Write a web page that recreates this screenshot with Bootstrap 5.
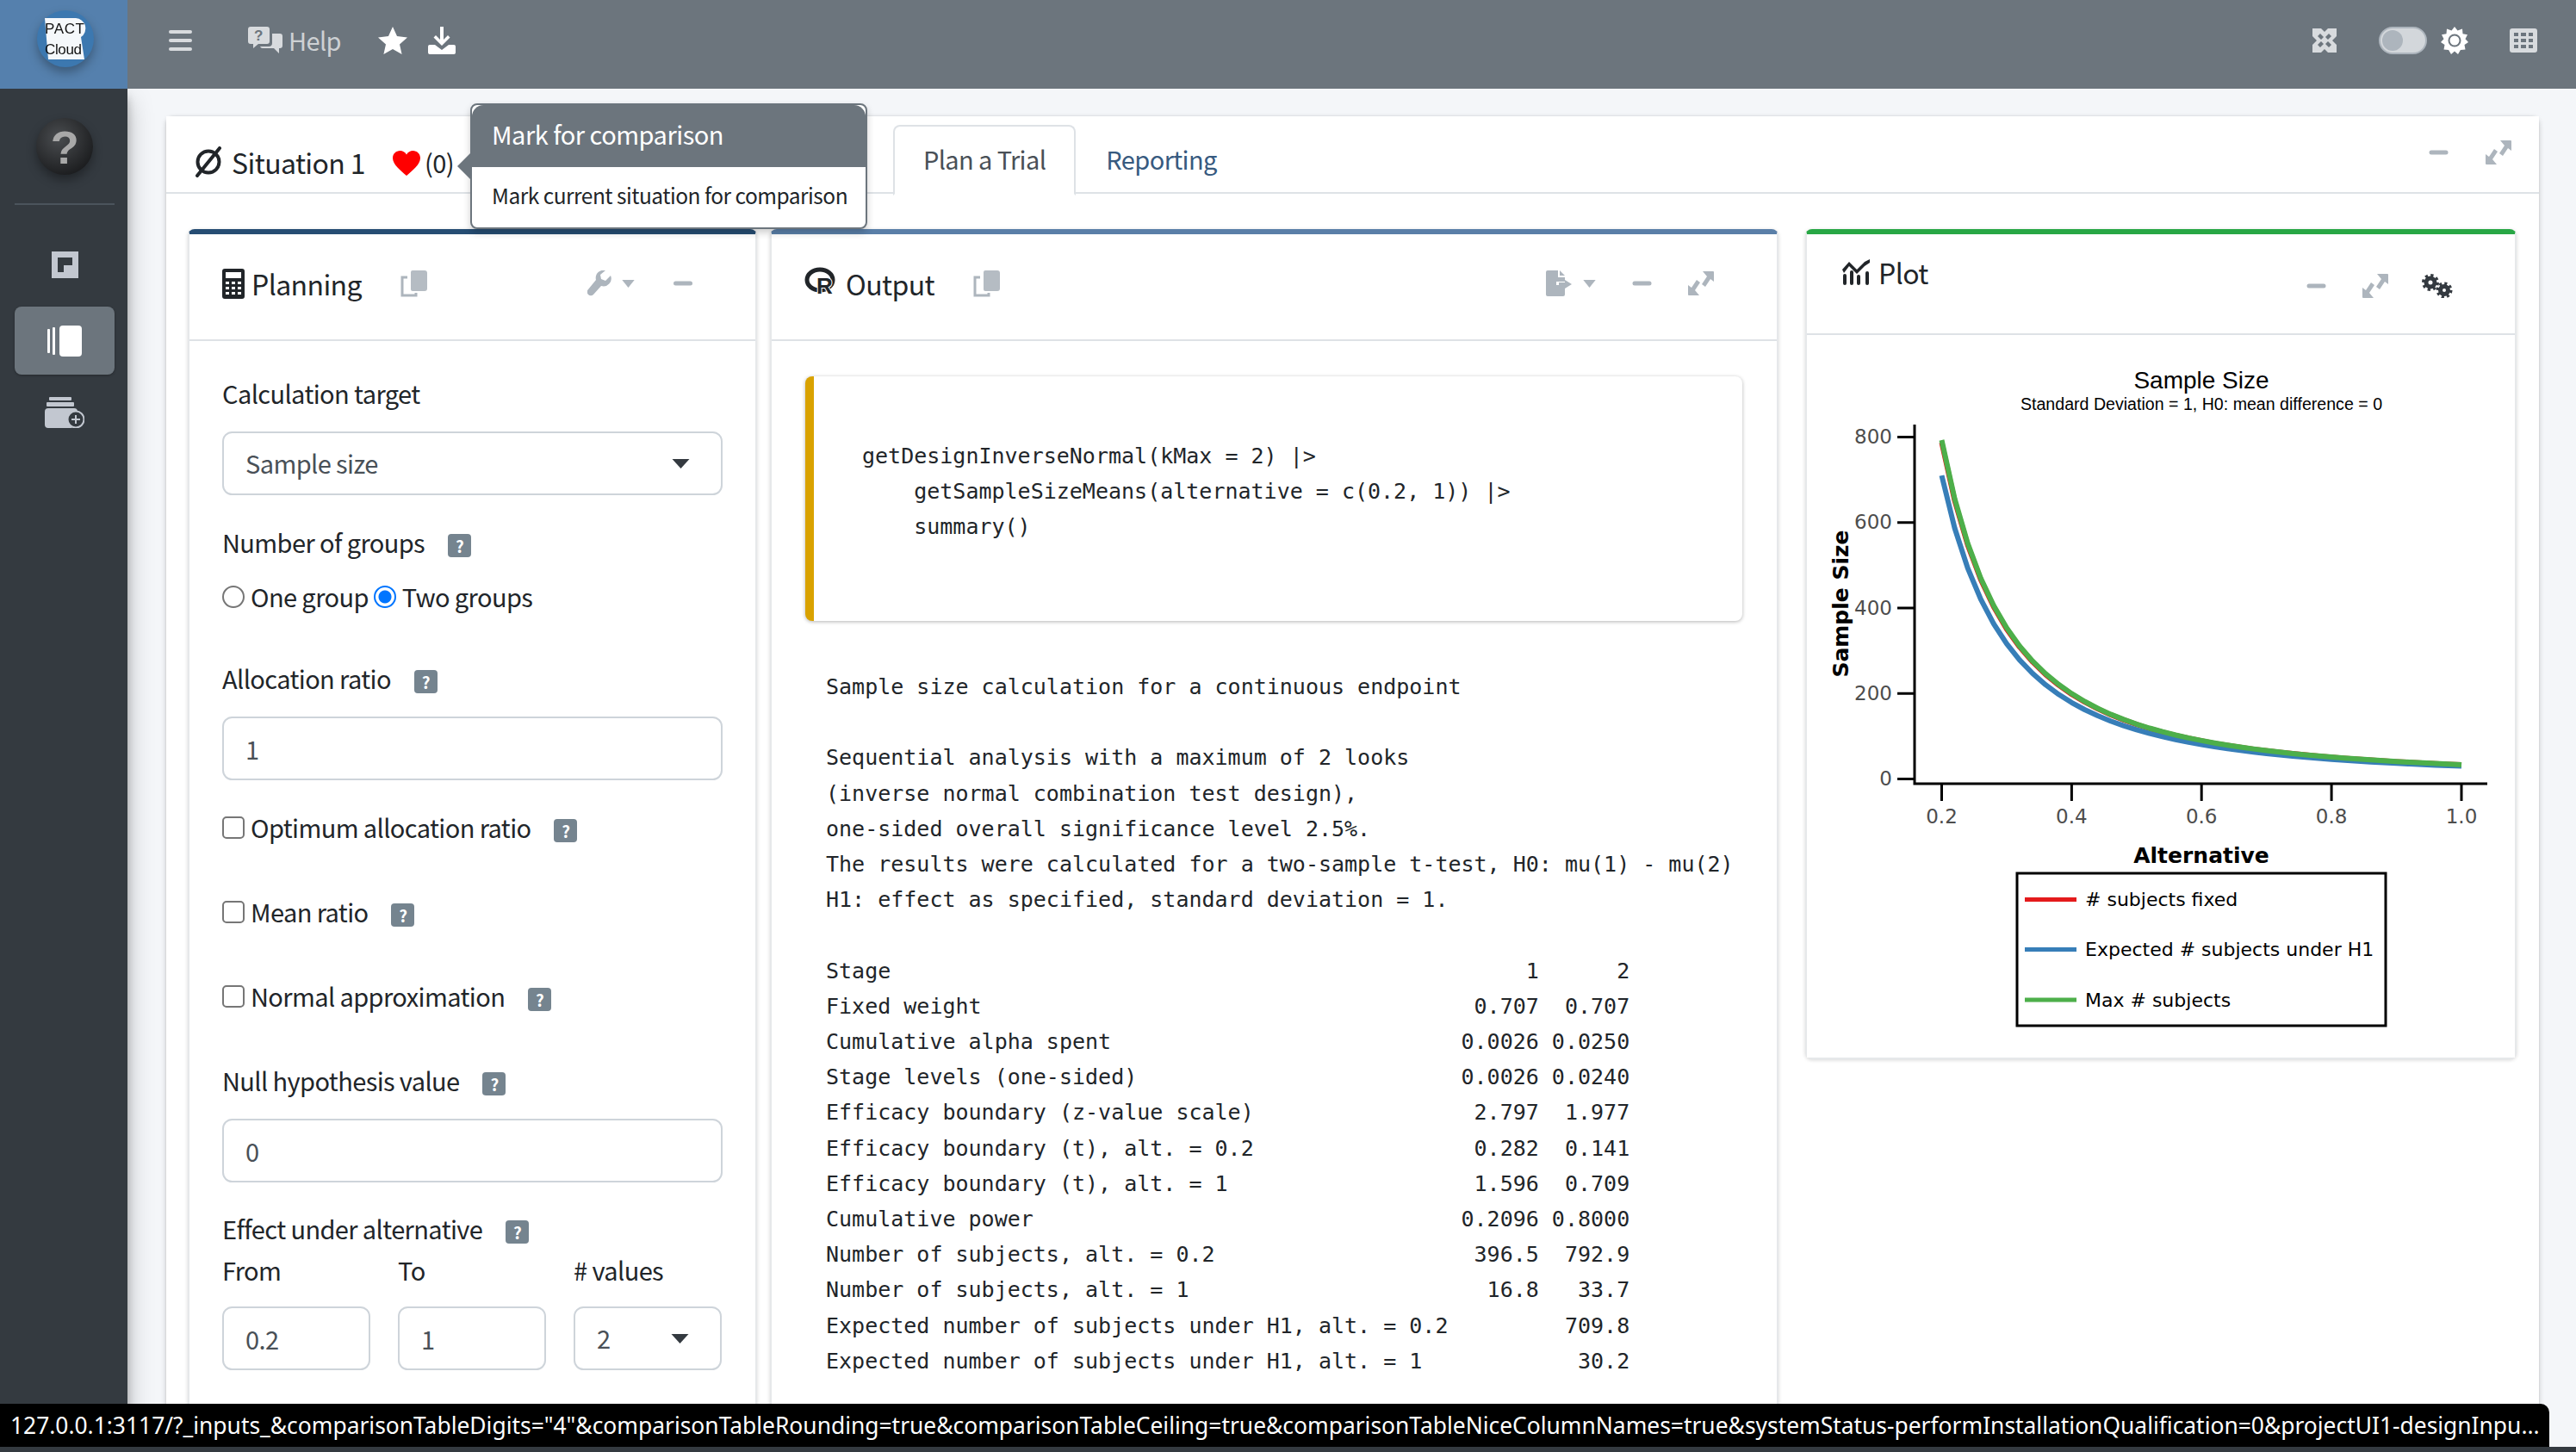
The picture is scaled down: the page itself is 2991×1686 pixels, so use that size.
<!DOCTYPE html>
<html lang="en">
<head>
<meta charset="utf-8">
<title>rpact Cloud</title>
<link href="https://cdn.jsdelivr.net/npm/bootstrap@5.3.3/dist/css/bootstrap.min.css" rel="stylesheet">
<script src="https://cdn.jsdelivr.net/npm/bootstrap@5.3.3/dist/js/bootstrap.bundle.min.js"></script>
<style>
  /* the app was captured at about 190% browser zoom, so scale the rem */
  html { font-size: 30.5px; }
  :root { --bs-border-width: 2px; --bs-border-color: #ced4da; }
  body {
    font-family: "Noto Sans CJK JP", "Noto Sans", sans-serif;
    font-size: 29px; letter-spacing: -.6px; line-height: 46px; color: #212529;
    background: #f4f6f9; height: 100vh; overflow: hidden;
  }
  svg { display: block; flex: none; }

  .top-bar { height: 103px; background: #6c757d; padding: 0 0 10px; flex: none; flex-wrap: nowrap; align-items: center; }
  .brand-box { width: 148px; height: 103px; margin-bottom: -10px; background: #5580ad; padding: 11px 0 0 42px; }
  .brand-logo { filter: drop-shadow(0 6px 6px rgba(0, 0, 0, .3)); }
  .top-ic { color: #d8dbde; }
  .top-wt { color: #fff; }
  .help-txt { color: #ced1d4; margin-left: 7px; margin-right: 43px; margin-top: -2px; }
  .bar-left { padding-left: 48px; }
  .bar-right { padding-right: 45px; }
  .tgl { width: 56px; height: 32px; border-radius: 16px; background: #d3d7db; border: 2px solid #adb5bd; padding: 2px; margin-right: 16px; }
  .tgl-knob { width: 24px; height: 24px; border-radius: 50%; background: #adb5bd; }

  .side-bar { width: 148px; background: #343a40; flex: none; position: relative; z-index: 2;
    box-shadow: 0 14px 28px rgba(0, 0, 0, .25), 0 10px 10px rgba(0, 0, 0, .22); padding: 33px 15px 0 17px; }
  .side-rule { border-top: 2px solid #4b545c; margin: 32px 0 54px; }
  .side-on { background: #6c757d; border-radius: 8px; height: 79px; margin: 33px 0 26px; box-shadow: 0 1px 3px rgba(0, 0, 0, .3); }
  .side-ball { filter: drop-shadow(0 6px 6px rgba(0, 0, 0, .35)); }

  .main-area { padding: 32px 43px 0 45px; min-width: 0; }
  .outer-card { border: 0; border-radius: 8px; box-shadow: 0 0 2px rgba(0, 0, 0, .13), 0 2px 6px rgba(0, 0, 0, .2); }
  .outer-head { height: 90px; padding: 17px 32px 0 32px; background: #fff; border-bottom: 2px solid #dee2e6; }
  .sit-name { font-size: 32px; margin-left: 10px; }
  .sit-heart { margin: 4px 0 0 32px; }
  .sit-count { margin-left: 5px; }
  .outer-head .nav-tabs { margin-left: 510px; border: 0; margin-bottom: -2px; align-self: flex-end; }
  .outer-head .nav-link { padding: 0 33px; height: 82px; line-height: 74px; color: #375a7f; border-width: 2px; border-radius: 8px 8px 0 0; margin-right: 0; }
  .outer-head .nav-link.active { color: #495057; border-color: #dee2e6 #dee2e6 #fff; }
  .card-tools { color: #adb5bd; }

  .panels { display: grid; grid-template-columns: 661px 1171px 810px; column-gap: 15px; padding: 41px 26px 0 25px; align-items: start; }
  .panels > .plot-panel { margin-left: 16px; width: 826px; }
  .panel { border-width: 0 2px 2px; border-color: #e6e8ea; border-radius: 8px; box-shadow: 0 1px 4px rgba(0, 0, 0, .16); }
  .panel-navy { border-top: 6px solid #264d73; }
  .panel-steel { border-top: 6px solid #5a7fa8; }
  .panel-green { border-top: 6px solid #28a745; }
  .panel-head { background: #fff; height: 124px; border-bottom: 2px solid #dee2e6; padding: 0 38px 8px 38px; }
  .panel-title { font-size: 32px; margin-left: 8px; }

  .plan-body { padding: 37px 38px 60px; height: 1290px; }
  .fld-label { margin-bottom: 22px; }
  .help-tag { display: inline-flex; align-items: center; justify-content: center; width: 27px; height: 27px; margin-left: 21px;
    background: #75848f; color: #fff; border-radius: 4px; font-size: 19px; font-weight: 700; vertical-align: 0; line-height: 1; }
  .native-opt { appearance: none; width: 26px; height: 26px; margin: 0 7px 0 0; vertical-align: -1px; background: #fff; border: 2px solid #767676; border-radius: 5px; }
  .native-opt[type=radio] { border-radius: 50%; }
  .native-opt[type=radio]:checked { border-color: #0075ff; background: radial-gradient(circle, #0075ff 0 7px, #fff 8px); }
  .radio-row { margin: -5px 0 49px; }
  .opt-row { margin-bottom: 52px; }
  .ctl { color: #495057; font-size: 29px; letter-spacing: inherit; height: 74px; padding-top: 0; padding-bottom: 0; padding-left: 25px; }
  .form-select.ctl { background-image: url("data:image/svg+xml,%3csvg xmlns='http://www.w3.org/2000/svg' viewBox='0 0 20 11'%3e%3cpath fill='%23343a40' d='M0 0h20L10 11z'/%3e%3c/svg%3e"); background-size: 21px 11px; background-position: right 36px center; }
  .three-up { display: grid; grid-template-columns: repeat(3, 172px); column-gap: 32px; }
  .three-up .fld-label { margin-bottom: 20px; }

  .code-box { margin: 41px 40px 0 39px; height: 284px; border-left: 10px solid #d9a200; border-radius: 8px; padding: 72px 0 0 56px;
    box-shadow: 0 1px 4px rgba(0, 0, 0, .3); background: #fff; }
  .mono-txt { font-family: "DejaVu Sans Mono", "Liberation Mono", monospace; letter-spacing: 0; font-size: 25px; line-height: 41.2px; margin: 0; color: #212529; overflow: visible; }
  .out-text { padding: 56px 0 60px 63px; }

  .plot-svg { letter-spacing: 0; }
  .plot-svg text { font-family: "DejaVu Sans", sans-serif; }
  .plot-svg .arial { font-family: "Liberation Sans", sans-serif; }

  .compare-pop { position: absolute; left: 546px; top: 120px; width: 461px; max-width: none; --bs-popover-border-color: #6c757d; --bs-popover-border-width: 2px; font-family: inherit; font-size: 24.500px; letter-spacing: -.5px; border-radius: 8px; box-shadow: 0 4px 8px rgba(0, 0, 0, .2); }
  .compare-pop .popover-header { background: #6c757d; color: #fff; font-size: 29px; font-weight: 400; height: 72px; padding: 0 23px; line-height: 66px; border: 0; margin: 0; }
  .compare-pop .popover-body { padding: 0 23px; line-height: 66px; height: 70px; color: #212529; white-space: nowrap; }
  .compare-pop .popover-arrow { position: absolute; left: -17px; top: 55px; width: 16px; height: 32px; }
  .url-bubble { position: fixed; left: 0; bottom: 6px; width: 2960px; height: 50px; background: #000; color: #fff; padding: 0 12px; font-family: "Noto Sans", sans-serif; font-size: 26.400px; letter-spacing: 0; line-height: 50px; white-space: nowrap; overflow: hidden; z-index: 20; border-top-right-radius: 10px; }
  .foot-strip { position: fixed; left: 0; right: 0; bottom: 0; height: 6px; background: #343a40; z-index: 19; }
</style>
</head>
<body class="d-flex flex-column">

<!-- icon sprite -->
<svg width="0" height="0" class="position-absolute">
  <symbol id="i-minus" viewBox="0 0 22 6"><rect width="22" height="5" y=".5" rx="2.5" fill="currentColor"/></symbol>
  <symbol id="i-expand" viewBox="0 0 30 30"><path fill="currentColor" d="M17 1h12a1 1 0 0 1 1 1v11l-4-3-6 9-4-3 6-9zM13 29H1a1 1 0 0 1-1-1V17l4 3 6-9 4 3-6 9z"/></symbol>
  <symbol id="i-copy" viewBox="0 0 32 32"><path fill="currentColor" d="M14 1h14a3 3 0 0 1 3 3v18a3 3 0 0 1-3 3H14a2 2 0 0 1-2-2V3a2 2 0 0 1 2-2z" opacity=".9"/><path fill="none" stroke="currentColor" stroke-width="3" d="M8 9H2v21h16v-3"/></symbol>
  <symbol id="i-caret" viewBox="0 0 16 10"><path fill="currentColor" d="M0 0h16L8 10z"/></symbol>
</svg>

<nav class="navbar top-bar">
  <div class="brand-box">
    <svg class="brand-logo" width="68" height="68" viewBox="0 0 68 68">
      <circle cx="34" cy="34" r="33" fill="#3c78b0"/>
      <path fill="#fff" d="M10 10h36a12 12 0 0 1 6 22l4 26H14z" opacity=".95"/>
      <text x="10" y="28" font-family="Liberation Sans, sans-serif" font-size="17" fill="#111" textLength="46" letter-spacing="0">PACT</text>
      <text x="10" y="52" font-family="Liberation Sans, sans-serif" font-size="17" fill="#111" textLength="43" letter-spacing="0">Cloud</text>
    </svg>
  </div>
  <div class="d-flex align-items-center bar-left">
    <svg class="top-ic" width="27" height="24" viewBox="0 0 27 24" fill="currentColor"><rect width="27" height="4" rx="2"/><rect y="10" width="27" height="4" rx="2"/><rect y="20" width="27" height="4" rx="2"/></svg>
    <svg class="top-ic" style="margin-left:65px" width="40" height="31" viewBox="0 0 40 31" fill="currentColor">
      <path d="M3 0h19a3 3 0 0 1 3 3v14a3 3 0 0 1-3 3H12l-6 5v-5H3a3 3 0 0 1-3-3V3a3 3 0 0 1 3-3z"/>
      <path d="M28 8h9a3 3 0 0 1 3 3v11a3 3 0 0 1-3 3h-1v6l-6-6H17a3 3 0 0 1-3-2h10a4 4 0 0 0 4-4z"/>
      <text x="7" y="16" font-family="Liberation Sans, sans-serif" font-weight="700" font-size="17" fill="#6c757d">?</text>
    </svg>
    <span class="help-txt">Help</span>
    <svg class="top-wt" width="34" height="32" viewBox="0 0 34 32" fill="currentColor"><path d="M17 0l5 11 12 1.400-9 8.100 2.600 11.500L17 26l-10.600 6L9 20.500 0 12.400 12 11z"/></svg>
    <svg class="top-wt" style="margin-left:24px" width="32" height="32" viewBox="0 0 32 32" fill="currentColor"><path d="M14 0h4v15l5-5 2.500 2.500L16 22 6.500 12.500 9 10l5 5z"/><path d="M0 23a2 2 0 0 1 2-2h6l8 6 8-6h6a2 2 0 0 1 2 2v7a2 2 0 0 1-2 2H2a2 2 0 0 1-2-2z"/></svg>
  </div>
  <div class="d-flex align-items-center ms-auto bar-right">
    <svg class="top-ic" style="margin-right:49px" width="28" height="28" viewBox="0 0 28 28" fill="currentColor"><path fill-rule="evenodd" d="M0 0h28v28H0zM0 9v10l5-5zM28 9v10l-5-5zM10 0h8l-4 4zM10 28h8l-4-4zM9 6l4 4-3 3-4-4zM19 6l3 3-4 4-3-3zM9 22l-3-3 4-4 3 3zM19 22l-4-4 3-3 4 4z"/></svg>
    <div class="tgl"><div class="tgl-knob"></div></div>
    <svg class="top-wt" width="32" height="32" viewBox="0 0 32 32"><path fill="currentColor" d="M16 0l3.500 4.500L25 2.500l.5 5.700 5.500 1-2.500 5L32 18l-4.500 3 1 5.600-5.600.4L20 32l-4-3.500L12 32l-2.900-5-5.600-.4 1-5.600L0 18l3.500-3.800-2.500-5 5.500-1L7 2.500l5.500 2z"/><circle cx="16" cy="16" r="7.500" fill="#6c757d"/><circle cx="16" cy="16" r="5.500" fill="#fff"/></svg>
    <svg class="top-ic" style="margin-left:48px" width="32" height="28" viewBox="0 0 32 28"><path fill="currentColor" fill-rule="evenodd" d="M3 0h26a3 3 0 0 1 3 3v22a3 3 0 0 1-3 3H3a3 3 0 0 1-3-3V3a3 3 0 0 1 3-3zM5 5v4h5V5zm8 0v4h6V5zm9 0v4h5V5zM5 12v4h5v-4zm8 0v4h6v-4zm9 0v4h5v-4zM5 19v4h5v-4zm8 0v4h6v-4zm9 0v4h5v-4z"/></svg>
  </div>
</nav>

<div class="d-flex flex-grow-1 overflow-hidden">
  <aside class="side-bar">
    <svg class="side-ball mx-auto" width="68" height="68" viewBox="0 0 68 68">
      <defs><radialGradient id="ballFill" cx=".4" cy=".35" r=".75"><stop offset="0" stop-color="#4a4d50"/><stop offset="1" stop-color="#17181a"/></radialGradient></defs>
      <circle cx="34" cy="34" r="33" fill="url(#ballFill)"/>
      <text x="34" y="54" text-anchor="middle" font-family="Liberation Sans, sans-serif" font-weight="700" font-size="54" fill="#a8a8a8">?</text>
    </svg>
    <div class="side-rule"></div>
    <svg class="mx-auto" width="31" height="31" viewBox="0 0 31 31"><path fill="#c2c7d0" fill-rule="evenodd" d="M0 0h31v31H0zM7 7v17h7v-8h10V7z"/></svg>
    <div class="side-on d-flex align-items-center justify-content-center">
      <svg width="40" height="36" viewBox="0 0 40 36" fill="#fff"><rect x="0" y="4" width="3" height="28" rx="1"/><rect x="6" y="2" width="3" height="32" rx="1"/><rect x="14" y="0" width="26" height="36" rx="4"/></svg>
    </div>
    <svg class="mx-auto" width="46" height="36" viewBox="0 0 46 36" fill="#c2c7d0"><rect x="5" y="0" width="26" height="4" rx="1"/><rect x="2" y="6" width="32" height="5" rx="1"/><path fill-rule="evenodd" d="M4 13h30a4 4 0 0 1 4 4v1a11 11 0 0 0-6 18H4a4 4 0 0 1-4-4V17a4 4 0 0 1 4-4z"/><circle cx="36" cy="26" r="9.500" fill="#343a40" stroke="#c2c7d0" stroke-width="2"/><path d="M35 21h2v4h4v2h-4v4h-2v-4h-4v-2h4z"/></svg>
  </aside>

  <main class="main-area flex-grow-1 overflow-hidden">
    <div class="card outer-card">
      <div class="outer-head d-flex align-items-center">
        <svg width="34" height="36" viewBox="0 0 34 36" fill="none" stroke="#212529" stroke-width="4"><circle cx="17" cy="18" r="12.500"/><path d="M30 2L4 34" stroke-linecap="round"/></svg>
        <span class="sit-name">Situation 1</span>
        <svg class="sit-heart" width="32" height="29" viewBox="0 0 32 29"><path fill="#f00" d="M16 29C9 23 0 16 0 8.500 0 3.500 4 0 8.500 0c3 0 6 1.500 7.500 4.500C17.500 1.500 20.500 0 23.500 0 28 0 32 3.500 32 8.500 32 16 23 23 16 29z"/></svg>
        <span class="sit-count">(0)</span>
        <ul class="nav nav-tabs">
          <li class="nav-item"><a class="nav-link active" href="#">Plan a Trial</a></li>
          <li class="nav-item"><a class="nav-link" href="#">Reporting</a></li>
        </ul>
        <div class="d-flex align-items-center ms-auto card-tools" style="margin-top:-22px">
          <svg width="23" height="6"><use href="#i-minus"/></svg>
          <svg width="30" height="30" style="margin-left:43px"><use href="#i-expand"/></svg>
        </div>
      </div>

      <div class="panels">
        <!-- Planning -->
        <section class="card panel panel-navy">
          <div class="panel-head d-flex align-items-center">
            <svg width="26" height="35" viewBox="0 0 26 35"><path fill="#212529" fill-rule="evenodd" d="M3 0h20a3 3 0 0 1 3 3v29a3 3 0 0 1-3 3H3a3 3 0 0 1-3-3V3a3 3 0 0 1 3-3zM4 4v7h18V4zM4 15v3h4v-3zm7 0v3h4v-3zm7 0v3h4v-3zM4 21v3h4v-3zm7 0v3h4v-3zm7 0v3h4v-3zM4 27v3h4v-3zm7 0v3h4v-3zm7 0v3h4v-3z"/></svg>
            <span class="panel-title">Planning</span>
            <svg class="card-tools" style="margin-left:45px" width="32" height="32"><use href="#i-copy"/></svg>
            <div class="d-flex align-items-center ms-auto card-tools" style="margin-right:35px">
              <svg width="28" height="30" viewBox="0 0 28 30" fill="currentColor"><path d="M27 6l-6 6-5-2-1-5 6-5a9 9 0 0 0-11 11L1 22a4 4 0 0 0 6 6l9-10A9 9 0 0 0 27 6z"/></svg>
              <svg width="15" height="9" style="margin-left:12px"><use href="#i-caret"/></svg>
              <svg width="22" height="6" style="margin-left:45px"><use href="#i-minus"/></svg>
            </div>
          </div>
          <div class="plan-body bg-white">
            <div class="fld-label">Calculation target</div>
            <select class="form-select ctl mb-3"><option>Sample size</option></select>
            <div class="fld-label">Number of groups <span class="help-tag">?</span></div>
            <div class="radio-row">
              <label><input class="native-opt" type="radio" name="grp">One group</label>
              <label><input class="native-opt" type="radio" name="grp" checked>Two groups</label>
            </div>
            <div class="fld-label">Allocation ratio <span class="help-tag">?</span></div>
            <input class="form-control ctl" value="1" style="margin-bottom:31px">
            <div class="opt-row"><label><input class="native-opt" type="checkbox">Optimum allocation ratio</label> <span class="help-tag">?</span></div>
            <div class="opt-row"><label><input class="native-opt" type="checkbox">Mean ratio</label> <span class="help-tag">?</span></div>
            <div class="opt-row"><label><input class="native-opt" type="checkbox">Normal approximation</label> <span class="help-tag">?</span></div>
            <div class="fld-label">Null hypothesis value <span class="help-tag">?</span></div>
            <input class="form-control ctl mb-3" value="0">
            <div style="margin-bottom:2px">Effect under alternative <span class="help-tag">?</span></div>
            <div class="three-up">
              <div><div class="fld-label">From</div><input class="form-control ctl" value="0.2"></div>
              <div><div class="fld-label">To</div><input class="form-control ctl" value="1"></div>
              <div><div class="fld-label"># values</div><select class="form-select ctl"><option>2</option></select></div>
            </div>
          </div>
        </section>

        <!-- Output -->
        <section class="card panel panel-steel">
          <div class="panel-head d-flex align-items-center">
            <svg width="40" height="38" viewBox="0 0 40 38"><ellipse cx="18" cy="15" rx="15" ry="12" fill="none" stroke="#212529" stroke-width="5"/><text x="14" y="31" font-family="Liberation Sans, sans-serif" font-weight="700" font-size="26" fill="#212529" stroke="#fff" stroke-width="2" paint-order="stroke" letter-spacing="0">R</text></svg>
            <span class="panel-title">Output</span>
            <svg class="card-tools" style="margin-left:45px" width="32" height="32"><use href="#i-copy"/></svg>
            <div class="d-flex align-items-center ms-auto card-tools" style="margin-right:35px">
              <svg width="32" height="30" viewBox="0 0 32 30" fill="currentColor"><path d="M0 2a2 2 0 0 1 2-2h12v8h8v5H12v4h10v11a2 2 0 0 1-2 2H2a2 2 0 0 1-2-2z"/><path d="M16 0l6 6h-6zM22 11l8 5-8 5v-3h-7v-4h7z"/></svg>
              <svg width="15" height="9" style="margin-left:11px"><use href="#i-caret"/></svg>
              <svg width="23" height="6" style="margin-left:42px"><use href="#i-minus"/></svg>
              <svg width="30" height="30" style="margin-left:42px"><use href="#i-expand"/></svg>
            </div>
          </div>
          <div class="bg-white">
            <div class="code-box"><pre class="mono-txt">getDesignInverseNormal(kMax = 2) |&gt;
    getSampleSizeMeans(alternative = c(0.2, 1)) |&gt;
    summary()</pre></div>
            <pre class="mono-txt out-text" id="outText"></pre>
          </div>
        </section>

        <!-- Plot -->
        <section class="card panel panel-green plot-panel">
          <div class="panel-head d-flex" style="height:117px;padding:0 72px 0 41px">
            <div class="d-flex align-items-center align-self-start" style="margin-top:21px">
              <svg width="34" height="30" viewBox="0 0 34 30" fill="#212529"><rect x="1" y="17" width="4" height="13" rx="2"/><rect x="9" y="13" width="4" height="17" rx="2"/><rect x="17" y="18" width="4" height="12" rx="2"/><rect x="27" y="14" width="4" height="16" rx="2"/><path d="M0 12l8-9 9 9 9-9 6-3v4l-6 4-9 9-9-9-6 8z"/></svg>
              <span class="panel-title">Plot</span>
            </div>
            <div class="d-flex align-items-center ms-auto card-tools" style="margin-top:5px">
              <svg width="23" height="6"><use href="#i-minus"/></svg>
              <svg width="30" height="30" style="margin-left:42px"><use href="#i-expand"/></svg>
              <svg width="36" height="28" viewBox="0 0 36 28" style="margin-left:39px" fill="none" stroke="#343a40">
                <circle cx="10" cy="10" r="5" stroke-width="5"/><circle cx="10" cy="10" r="8" stroke-width="4" stroke-dasharray="3.100 3.180"/>
                <circle cx="26" cy="19" r="4.500" stroke-width="5"/><circle cx="26" cy="19" r="7.500" stroke-width="4" stroke-dasharray="2.950 2.940"/>
              </svg>
            </div>
          </div>
          <svg class="plot-svg bg-white" width="822" height="839" viewBox="2 -1 822 839" id="plotSvg">
            <text class="arial" x="460" y="61" text-anchor="middle" font-size="28">Sample Size</text>
            <text class="arial" x="460" y="86" text-anchor="middle" font-size="19.600">Standard Deviation = 1, H0: mean difference = 0</text>
            <g stroke="#000" stroke-width="3" fill="none">
              <path d="M127 103V520H792"/>
              <path d="M107 117.400h20M107 216.700h20M107 316h20M107 415.300h20M107 514.600h20"/>
              <path d="M158.500 520v20M309.400 520v20M460.200 520v20M611.100 520v20M762 520v20"/>
            </g>
            <g font-size="23" fill="#4d4d4d" text-anchor="end">
              <text x="101" y="125">800</text><text x="101" y="224">600</text><text x="101" y="324">400</text><text x="101" y="423">200</text><text x="101" y="522">0</text>
            </g>
            <g font-size="23" fill="#4d4d4d" text-anchor="middle">
              <text x="158.500" y="566">0.2</text><text x="309.400" y="566">0.4</text><text x="460.200" y="566">0.6</text><text x="611.100" y="566">0.8</text><text x="762" y="566">1.0</text>
            </g>
            <text x="460" y="612" text-anchor="middle" font-size="25" font-weight="700">Alternative</text>
            <text transform="translate(50 311) rotate(-90)" text-anchor="middle" font-size="25" font-weight="700">Sample Size</text>
            <g id="curves" fill="none" stroke-width="6" stroke-linejoin="round"></g>
            <rect x="246" y="624" width="428" height="177" fill="#fff" stroke="#000" stroke-width="3"/>
            <g stroke-width="5">
              <path d="M255 654.500h60" stroke="#e41a1c"/><path d="M255 712.600h60" stroke="#377eb8"/><path d="M255 771h60" stroke="#4daf4a"/>
            </g>
            <g font-size="22" fill="#000">
              <text x="325" y="662"># subjects fixed</text><text x="325" y="720">Expected # subjects under H1</text><text x="325" y="779">Max # subjects</text>
            </g>
          </svg>
        </section>
      </div>
    </div>
  </main>
</div>

<!-- tooltip that was open when the screenshot was taken -->
<div class="popover bs-popover-end compare-pop">
  <svg class="popover-arrow" viewBox="0 0 16 32"><path fill="#6c757d" d="M16 0L0 16l16 16z"/></svg>
  <h3 class="popover-header">Mark for comparison</h3>
  <div class="popover-body">Mark current situation for comparison</div>
</div>

<div class="foot-strip"></div>
<div class="url-bubble">127.0.0.1:3117/?_inputs_&amp;comparisonTableDigits="4"&amp;comparisonTableRounding=true&amp;comparisonTableCeiling=true&amp;comparisonTableNiceColumnNames=true&amp;systemStatus-performInstallationQualification=0&amp;projectUI1-designInpu...</div>

<script>
  // summary output, columns are padded like the R console does it
  const rows = [
    ['Stage', '1', '2'],
    ['Fixed weight', '0.707', '0.707'],
    ['Cumulative alpha spent', '0.0026', '0.0250'],
    ['Stage levels (one-sided)', '0.0026', '0.0240'],
    ['Efficacy boundary (z-value scale)', '2.797', '1.977'],
    ['Efficacy boundary (t), alt. = 0.2', '0.282', '0.141'],
    ['Efficacy boundary (t), alt. = 1', '1.596', '0.709'],
    ['Cumulative power', '0.2096', '0.8000'],
    ['Number of subjects, alt. = 0.2', '396.5', '792.9'],
    ['Number of subjects, alt. = 1', '16.8', '33.7'],
    ['Expected number of subjects under H1, alt. = 0.2', '', '709.8'],
    ['Expected number of subjects under H1, alt. = 1', '', '30.2']
  ]
  const head = [
    'Sample size calculation for a continuous endpoint', '',
    'Sequential analysis with a maximum of 2 looks',
    '(inverse normal combination test design),',
    'one-sided overall significance level 2.5%.',
    'The results were calculated for a two-sample t-test, H0: mu(1) - mu(2)',
    'H1: effect as specified, standard deviation = 1.', ''
  ]
  const body = rows.map(r => r[0].padEnd(49) + r[1].padStart(6) + ' ' + r[2].padStart(6))
  document.querySelector('#outText').textContent = head.concat(body).join('\n')

  // the three sample size curves, n = a / x^2 + b fitted on the table above
  const curves = [
    {color: '#e41a1c', a: 31.4, b: 2},
    {color: '#377eb8', a: 28.32, b: 1.88},
    {color: '#4daf4a', a: 31.63, b: 2.07}
  ]
  const group = document.querySelector('#curves')
  for (let i = 0; i < curves.length; i++) {
    let d = ''
    for (let x = 0.2; x <= 1.0001; x += 0.02) {
      const px = 158.5 + (x - 0.2) * 754.4
      const py = 514.6 - (curves[i].a / (x * x) + curves[i].b) * 0.4965
      d += (d ? 'L' : 'M') + px.toFixed(1) + ' ' + py.toFixed(1)
    }
    const line = document.createElementNS('http://www.w3.org/2000/svg', 'path')
    line.setAttribute('d', d)
    line.setAttribute('stroke', curves[i].color)
    group.appendChild(line)
  }
</script>
</body>
</html>
